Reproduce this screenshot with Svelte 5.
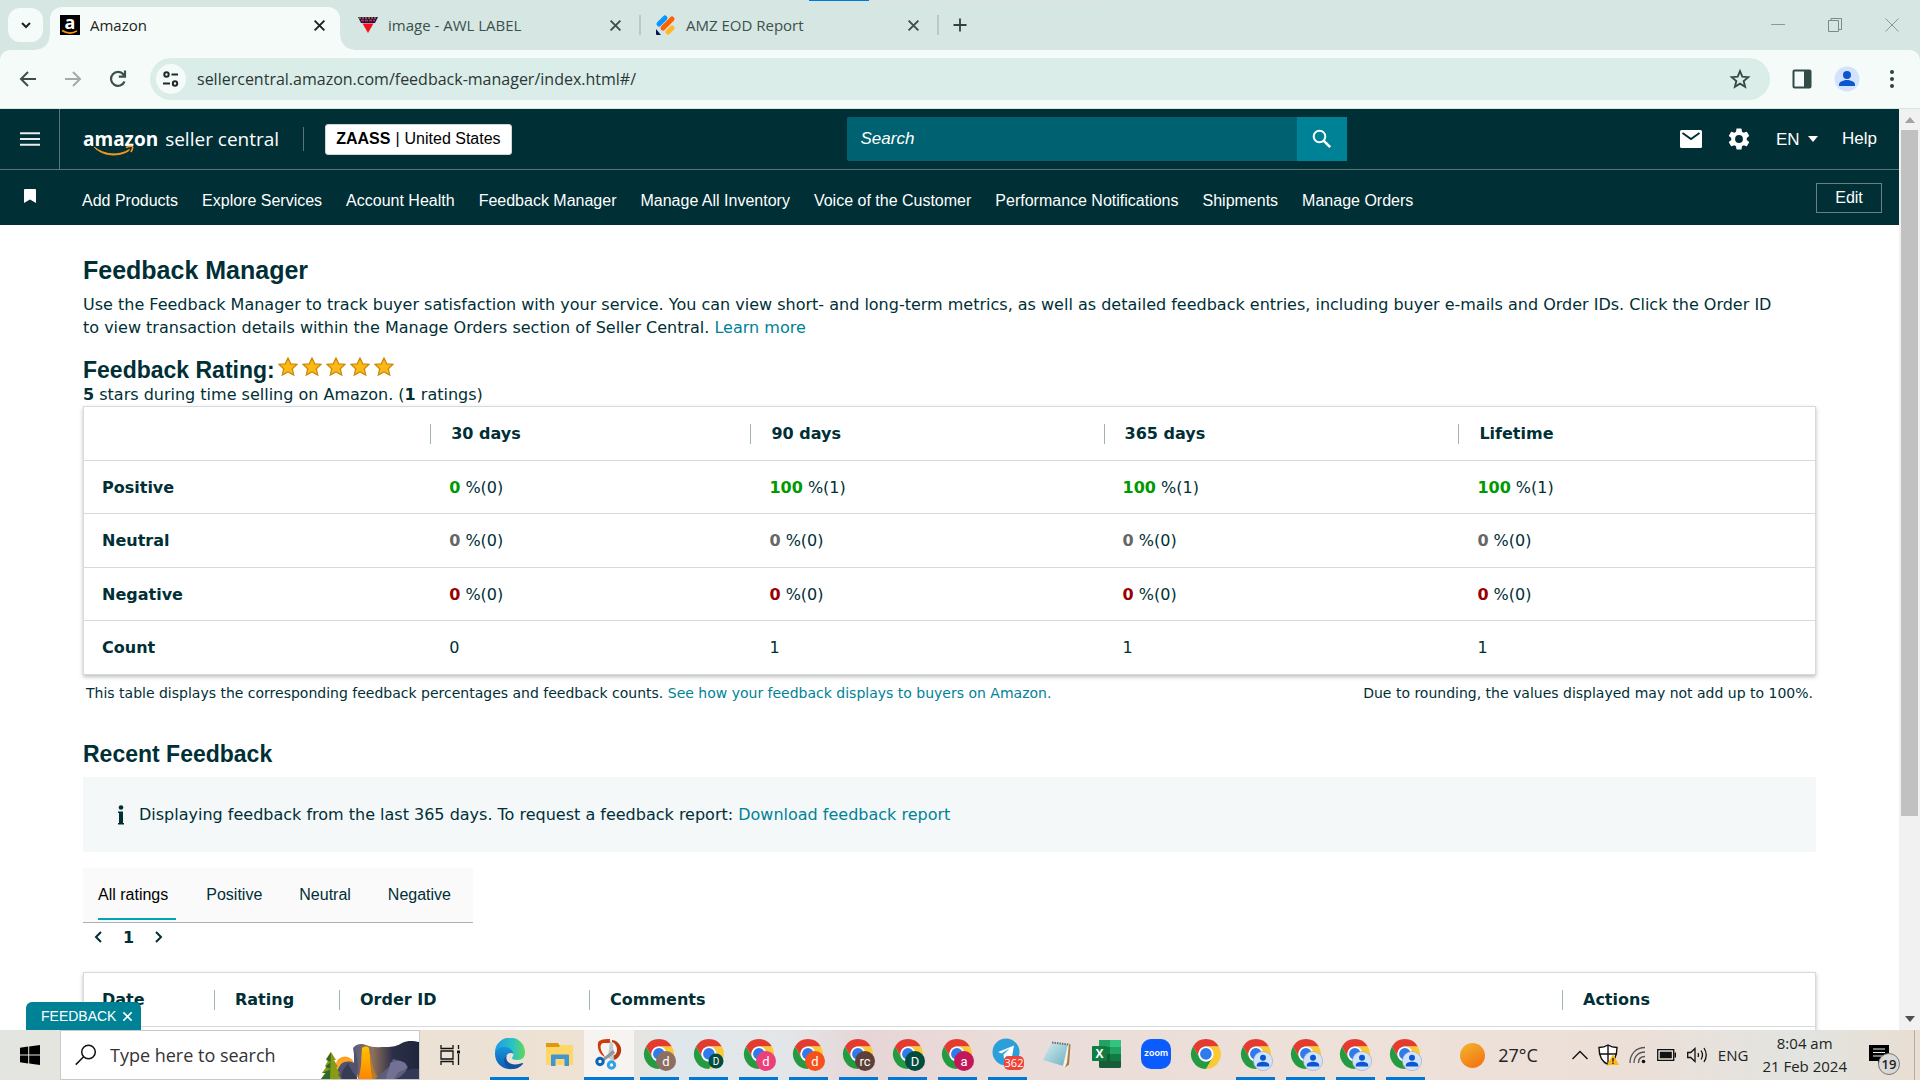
<script lang="ts">
	const tabs = [
		{ title: 'Amazon', icon: 'amazon', active: true },
		{ title: 'image - AWL LABEL', icon: 'awl', active: false },
		{ title: 'AMZ EOD Report', icon: 'jot', active: false }
	];

	const favourites = [
		'Add Products',
		'Explore Services',
		'Account Health',
		'Feedback Manager',
		'Manage All Inventory',
		'Voice of the Customer',
		'Performance Notifications',
		'Shipments',
		'Manage Orders'
	];

	const periods = ['30 days', '90 days', '365 days', 'Lifetime'];

	const ratings = [
		{ label: 'Positive', tone: 'good', values: [[0, 0], [100, 1], [100, 1], [100, 1]] },
		{ label: 'Neutral', tone: 'flat', values: [[0, 0], [0, 0], [0, 0], [0, 0]] },
		{ label: 'Negative', tone: 'bad', values: [[0, 0], [0, 0], [0, 0], [0, 0]] }
	];

	const counts = [0, 1, 1, 1];

	const filters = ['All ratings', 'Positive', 'Neutral', 'Negative'];
	let filter = $state('All ratings');

	let url = $state('sellercentral.amazon.com/feedback-manager/index.html#/');

	const apps = [
		{ name: 'Edge', kind: 'edge', open: true },
		{ name: 'File Explorer', kind: 'folder', open: false },
		{ name: 'Snipping Tool', kind: 'snip', open: true, current: true },
		{ name: 'Chrome', kind: 'chrome', open: true, badge: 'd', color: '#8d6e63' },
		{ name: 'Chrome', kind: 'chrome', open: true, badge: 'D', color: '#004d40', small: true },
		{ name: 'Chrome', kind: 'chrome', open: true, badge: 'd', color: '#ec407a' },
		{ name: 'Chrome', kind: 'chrome', open: true, badge: 'd', color: '#f4511e' },
		{ name: 'Chrome', kind: 'chrome', open: true, badge: 'rc', color: '#5d4037' },
		{ name: 'Chrome', kind: 'chrome', open: true, badge: 'D', color: '#004d40' },
		{ name: 'Chrome', kind: 'chrome', open: true, badge: 'a', color: '#c2185b' },
		{ name: 'Telegram', kind: 'telegram', open: true },
		{ name: 'Notepad', kind: 'notepad', open: false },
		{ name: 'Excel', kind: 'excel', open: false },
		{ name: 'Zoom', kind: 'zoom', open: false },
		{ name: 'Chrome', kind: 'chrome', open: false },
		{ name: 'Chrome', kind: 'chrome', open: true, person: true },
		{ name: 'Chrome', kind: 'chrome', open: true, person: true },
		{ name: 'Chrome', kind: 'chrome', open: true, person: true },
		{ name: 'Chrome', kind: 'chrome', open: true, person: true }
	];
</script>

{#snippet cross(size)}
	<svg width={size} height={size} viewBox="0 0 12 12" aria-hidden="true">
		<path d="M1.5 1.5l9 9M10.5 1.5l-9 9" stroke="currentColor" stroke-width="1.8" />
	</svg>
{/snippet}

{#snippet chromeIcon(app)}
	<svg width="36" height="36" viewBox="0 0 36 36" aria-hidden="true">
		<g transform="translate(1.6 1.6) scale(.68)">
			<path fill="#e33b2e" d="M24 2a22 22 0 0 1 19.05 11H24a11 11 0 0 0-9.53 16.5L4.95 13A22 22 0 0 1 24 2z" />
			<path fill="#fcc934" transform="rotate(120 24 24)" d="M24 2a22 22 0 0 1 19.05 11H24a11 11 0 0 0-9.53 16.5L4.95 13A22 22 0 0 1 24 2z" />
			<path fill="#249a41" transform="rotate(240 24 24)" d="M24 2a22 22 0 0 1 19.05 11H24a11 11 0 0 0-9.53 16.5L4.95 13A22 22 0 0 1 24 2z" />
			<circle cx="24" cy="24" r="11" fill="#fff" />
			<circle cx="24" cy="24" r="8.6" fill="#2f7bee" />
		</g>
		{#if app.badge}
			<circle cx={25} cy={25} r={app.small ? 7.5 : 10} fill={app.color} />
			<text x="25" y={app.small ? 29 : 30} text-anchor="middle" fill="#fff" font-size={app.small ? 10 : 13} font-family="Roboto, sans-serif">{app.badge}</text>
		{:else if app.person}
			<circle cx="25" cy="25" r="9.6" fill="#d3e3fd" stroke="#9aa4b5" stroke-width=".6" />
			<circle cx="25" cy="21.8" r="3" fill="#0b57d0" />
			<path d="M18.8 30.4v-1.2c0-2.4 3.6-3.4 6.2-3.4s6.2 1 6.2 3.4v1.2z" fill="#0b57d0" />
		{/if}
	</svg>
{/snippet}

<div class="screen">
	<header class="browser">
		<div class="strip">
			<button class="tab-search" aria-label="Search tabs">
				<svg width="14" height="14" viewBox="0 0 14 14"><path d="M3 5l4 4 4-4" fill="none" stroke="#1c2322" stroke-width="2" /></svg>
			</button>
			{#each tabs as tab}
				<div class="tab" class:active={tab.active}>
					<svg width="20" height="20" viewBox="0 0 20 20" aria-hidden="true">
						{#if tab.icon === 'amazon'}
							<rect width="20" height="20" fill="#000" />
							<text x="10" y="14" text-anchor="middle" font-size="18" font-weight="bold" fill="#fff" font-family="Open Sans, sans-serif">a</text>
							<path d="M2 15.5q8 5 15 .3" fill="none" stroke="#f90" stroke-width="1.6" />
						{:else if tab.icon === 'awl'}
							<path d="M0 2h20l-3 6H3z" fill="#2b1140" />
							<path d="M1 3h18" stroke="#d9a036" stroke-width="1.2" stroke-dasharray="2 1" />
							<path d="M3 5.5h14" stroke="#c2336b" stroke-width="1.4" stroke-dasharray="3 1" />
							<path d="M4.500 8.500h11L10 18z" fill="#f5101c" />
						{:else}
							<path d="M3 9l6-6" stroke="#0a96ff" stroke-width="5" stroke-linecap="round" />
							<path d="M7 13l9-9" stroke="#ff6100" stroke-width="5" stroke-linecap="round" />
							<path d="M12 17l4-4" stroke="#ffb629" stroke-width="5" stroke-linecap="round" />
							<path d="M0 14l5 6H1a1 1 0 0 1-1-1z" fill="#0a1551" />
						{/if}
					</svg>
					<span>{tab.title}</span>
					<button aria-label="Close {tab.title}">{@render cross(13)}</button>
				</div>
			{/each}
			<button class="new-tab" aria-label="New tab">
				<svg width="14" height="14" viewBox="0 0 14 14"><path d="M7 .5v13M.5 7h13" stroke="#2f4240" stroke-width="1.8" /></svg>
			</button>
			<div class="window-buttons">
				<button aria-label="Minimize"><svg width="14" height="14" viewBox="0 0 14 14"><path d="M0 6.500h14" stroke="#8d9996" /></svg></button>
				<button aria-label="Restore">
					<svg width="14" height="14" viewBox="0 0 14 14" fill="none" stroke="#7d8987"><path d="M.5 2.500h10v11H.5zM3 2.500v-2h10.500v11H11" /></svg>
				</button>
				<button aria-label="Close window"><svg width="14" height="14" viewBox="0 0 14 14"><path d="M.5.5l13 13M13.500.5l-13 13" stroke="#8d9996" /></svg></button>
			</div>
			<div class="loading"></div>
		</div>

		<div class="toolbar">
			<div class="history">
				<button aria-label="Back">
					<svg width="20" height="20" viewBox="0 0 20 20" fill="none" stroke="#3b504d" stroke-width="2"><path d="M18 10H3M10 3l-7 7 7 7" /></svg>
				</button>
				<button aria-label="Forward">
					<svg width="20" height="20" viewBox="0 0 20 20" fill="none" stroke="#a3abaa" stroke-width="2"><path d="M2 10h15M10 3l7 7-7 7" /></svg>
				</button>
				<button aria-label="Reload">
					<svg width="20" height="20" viewBox="0 0 20 20" fill="none" stroke="#3b504d" stroke-width="2.200"><path d="M16.500 12.500A7 7 0 1 1 15.500 5.500L17 7.300M17 1.500v6.200h-6.200" /></svg>
				</button>
			</div>
			<div class="address">
				<button class="site" aria-label="Site information">
					<svg width="16" height="16" viewBox="0 0 16 16" fill="none" stroke="#222b2a" stroke-width="2"><circle cx="3.500" cy="3.500" r="2.200" /><path d="M8.500 3.500H15M0 12.500h7" /><circle cx="12" cy="12.500" r="2.200" /></svg>
				</button>
				<input aria-label="Address" bind:value={url} />
				<button aria-label="Bookmark this page">
					<svg width="22" height="22" viewBox="0 0 24 24" fill="none" stroke="#3b4745" stroke-width="2"><path d="M12 3.500l2.500 6 6.500.500-5 4.200 1.600 6.300-5.600-3.400-5.600 3.400L8 14.200 3 10l6.500-.500z" /></svg>
				</button>
			</div>
			<button aria-label="Side panel">
				<svg width="20" height="20" viewBox="0 0 20 20"><rect x="1.500" y="1.500" width="17" height="17" rx="1" fill="none" stroke="#334b48" stroke-width="2" /><path d="M12 1h7v18h-7z" fill="#334b48" /></svg>
			</button>
			<button aria-label="Profile">
				<svg width="26" height="26" viewBox="0 0 26 26"><circle cx="13" cy="13" r="12.500" fill="#d3e3fd" /><circle cx="13" cy="9" r="4" fill="#0b57d0" /><path d="M5 20v-1.500c0-3 5-4.500 8-4.500s8 1.500 8 4.500V20z" fill="#0b57d0" /></svg>
			</button>
			<button aria-label="Menu">
				<svg width="20" height="20" viewBox="0 0 20 20" fill="#2d4340"><circle cx="10" cy="3" r="2" /><circle cx="10" cy="10" r="2" /><circle cx="10" cy="17" r="2" /></svg>
			</button>
		</div>
	</header>

	<div class="viewport">
		<div class="page">
			<div class="masthead">
				<button class="burger" aria-label="Menu">
					<svg width="20" height="14" viewBox="0 0 20 14"><path d="M0 1.200h20M0 7h20M0 12.800h20" stroke="#e8eeee" stroke-width="2" /></svg>
				</button>
				<a class="logo" href="#/">
					<b>amazon</b> <span>seller central</span>
					<svg width="42" height="11" viewBox="0 0 42 11" aria-hidden="true"><path d="M1 2c11 8.500 25 9 35.500 2.500l-1.200 1.700C25 12 10 11.500 1 2z" fill="#f7981d" stroke="#f7981d" /><path d="M33 2.500c3-1.500 6-1.300 6.500-.8s0 3.300-1.800 5.300" fill="none" stroke="#f7981d" stroke-width="1.600" /></svg>
				</a>
				<button class="account"><b>ZAASS</b> | <span>United States</span></button>
				<form class="search" role="search">
					<input type="search" aria-label="Search" placeholder="Search" />
					<button type="button" aria-label="Submit search">
						<svg width="20" height="20" viewBox="0 0 20 20" fill="none" stroke="#fff"><circle cx="7.500" cy="7.500" r="5.800" stroke-width="2" /><path d="M11.800 11.800l6.400 6.400" stroke-width="2.600" /></svg>
					</button>
				</form>
				<div class="tools">
					<button aria-label="Messages">
						<svg width="22" height="18" viewBox="0 0 22 18"><rect width="22" height="18" rx="1.500" fill="#fff" /><path d="M2.500 3l8.500 6 8.500-6" fill="none" stroke="#002f36" stroke-width="2" /></svg>
					</button>
					<button aria-label="Settings">
						<svg width="26" height="26" viewBox="0 0 24 24" fill="#fff"><path d="M19.140 12.940c.04-.3.06-.61.06-.94 0-.32-.02-.64-.07-.94l2.030-1.580a.49.49 0 0 0 .12-.61l-1.920-3.320a.488.488 0 0 0-.59-.22l-2.390.96c-.5-.38-1.030-.7-1.620-.94l-.36-2.540a.484.484 0 0 0-.48-.41h-3.840c-.24 0-.43.17-.47.41l-.36 2.540c-.59.24-1.130.57-1.620.94l-2.390-.96c-.22-.08-.47 0-.59.22L2.740 8.870c-.12.21-.08.47.12.61l2.030 1.580c-.05.3-.09.63-.09.94s.02.64.07.94l-2.030 1.580a.49.49 0 0 0-.12.61l1.920 3.320c.12.22.37.29.59.22l2.390-.96c.5.38 1.030.7 1.620.94l.36 2.540c.05.24.24.41.48.41h3.840c.24 0 .44-.17.47-.41l.36-2.540c.59-.24 1.130-.56 1.620-.94l2.390.96c.22.08.47 0 .59-.22l1.920-3.320c.12-.22.07-.47-.12-.61l-2.010-1.580zM12 15.600A3.600 3.600 0 1 1 12 8.400a3.600 3.600 0 0 1 0 7.200z" /></svg>
					</button>
					<label class="language">
						<select aria-label="Language"><option>EN</option></select>
						<svg width="10" height="6" viewBox="0 0 10 6" aria-hidden="true"><path d="M0 0h10L5 6z" fill="#fff" /></svg>
					</label>
					<a href="#/help">Help</a>
				</div>
			</div>

			<nav class="favourites">
				<span class="pin"><svg width="12" height="14" viewBox="0 0 12 14" aria-hidden="true"><path d="M0 1a1 1 0 0 1 1-1h10a1 1 0 0 1 1 1v13l-6-3.500L0 14z" fill="#fff" /></svg></span>
				<div class="links">
					{#each favourites as item}
						<a href="#/">{item}</a>
					{/each}
				</div>
				<button>Edit</button>
			</nav>

			<main>
				<h1>Feedback Manager</h1>
				<p class="intro">
					Use the Feedback Manager to track buyer satisfaction with your service. You can view short- and long-term metrics, as well as detailed feedback entries, including buyer e-mails and Order IDs. Click the Order ID to view transaction details within the Manage Orders section of Seller Central. <a href="#/learn">Learn more</a>
				</p>

				<div class="rating-title">
					<h2>Feedback Rating:</h2>
					<div class="stars" role="img" aria-label="5 stars">
						{#each Array(5) as _}
							<svg width="20" height="20" viewBox="0 0 20 20"><path d="M10 1l2.700 5.800 6.300.6-4.700 4.300L15.700 18 10 15l-5.700 3 1.400-6.300L1 7.400l6.300-.6z" fill="#fdb913" stroke="#c98a0c" stroke-width="1.300" /></svg>
						{/each}
					</div>
				</div>
				<p class="summary"><b>5</b> stars during time selling on Amazon. (<b>1</b> ratings)</p>

				<table class="metrics">
					<thead>
						<tr>
							<td></td>
							{#each periods as period}
								<th scope="col"><span>{period}</span></th>
							{/each}
						</tr>
					</thead>
					<tbody>
						{#each ratings as row}
							<tr>
								<th scope="row">{row.label}</th>
								{#each row.values as [percent, count]}
									<td><b class={row.tone}>{percent}</b> %({count})</td>
								{/each}
							</tr>
						{/each}
						<tr>
							<th scope="row">Count</th>
							{#each counts as count}
								<td>{count}</td>
							{/each}
						</tr>
					</tbody>
				</table>
				<div class="notes">
					<span>This table displays the corresponding feedback percentages and feedback counts. <a href="#/display">See how your feedback displays to buyers on Amazon.</a></span>
					<span>Due to rounding, the values displayed may not add up to 100%.</span>
				</div>

				<h2 class="recent">Recent Feedback</h2>
				<div class="info">
					<svg width="6" height="20" viewBox="0 0 6 20" aria-hidden="true"><circle cx="3" cy="2.500" r="2.300" fill="#002f36" /><path d="M0 6.500h5V18h1v1.500H0V18h1V8H0z" fill="#002f36" /></svg>
					<span>Displaying feedback from the last 365 days. To request a feedback report: <a href="#/report">Download feedback report</a></span>
				</div>

				<div class="filters" role="tablist">
					{#each filters as item}
						<button role="tab" aria-selected={filter === item} class:selected={filter === item} onclick={() => (filter = item)}>{item}</button>
					{/each}
				</div>
				<div class="pager">
					<button aria-label="Previous page"><svg width="8" height="12" viewBox="0 0 8 12"><path d="M7 1L2 6l5 5" fill="none" stroke="#002f36" stroke-width="2" /></svg></button>
					<b>1</b>
					<button aria-label="Next page"><svg width="8" height="12" viewBox="0 0 8 12"><path d="M1 1l5 5-5 5" fill="none" stroke="#002f36" stroke-width="2" /></svg></button>
				</div>

				<table class="entries">
					<thead>
						<tr>
							<th scope="col"><span>Date</span></th>
							<th scope="col"><span>Rating</span></th>
							<th scope="col"><span>Order ID</span></th>
							<th scope="col"><span>Comments</span></th>
							<th scope="col"><span>Actions</span></th>
						</tr>
					</thead>
					<tbody>
						<tr><td colspan="5"></td></tr>
					</tbody>
				</table>
			</main>
			<button class="feedback-tab">FEEDBACK {@render cross(11)}</button>
		</div>

		<div class="scrollbar">
			<svg width="10" height="6" viewBox="0 0 10 6" aria-hidden="true"><path d="M0 6h10L5 0z" fill="#a3a3a3" /></svg>
			<div class="rail"><div class="thumb"></div></div>
			<svg width="10" height="6" viewBox="0 0 10 6" aria-hidden="true"><path d="M0 0h10L5 6z" fill="#505050" /></svg>
		</div>
	</div>

	<footer class="taskbar">
		<button class="start" aria-label="Start">
			<svg width="20" height="20" viewBox="0 0 20 20"><path d="M0 2.800L8.200 1.600v8H0zM9.200 1.500L20 0v9.600H9.200zM0 10.500h8.200v8L0 17.300zM9.200 10.500H20V20L9.200 18.600z" /></svg>
		</button>
		<div class="task-search">
			<svg width="22" height="22" viewBox="0 0 22 22" fill="none" stroke="#111" stroke-width="1.500" aria-hidden="true"><circle cx="13.500" cy="8" r="6.800" /><path d="M8.600 12.800L.8 20.600" /></svg>
			<input aria-label="Type here to search" placeholder="Type here to search" />
			<svg class="scene" width="99" height="38" viewBox="0 0 99 38" aria-hidden="true">
				<defs>
					<linearGradient id="sun" x2="0" y2="1"><stop offset="0" stop-color="#ff9d1c" /><stop offset="1" stop-color="#ffb84d" /></linearGradient>
					<linearGradient id="fall" x2="0" y2="1"><stop offset="0" stop-color="#ffc400" /><stop offset="1" stop-color="#ff8400" /></linearGradient>
					<linearGradient id="rock"><stop offset="0" stop-color="#5a5d7c" /><stop offset=".3" stop-color="#8d705d" /><stop offset=".6" stop-color="#2b3048" /><stop offset="1" stop-color="#20263a" /></linearGradient>
				</defs>
				<circle cx="25" cy="25" r="9.500" fill="url(#sun)" />
				<path d="M33 7c3-4 8-5 13-3 6 3 14 2 20 2 7 0 11-1 16-4 6-3 12-2 17-1v37H38z" fill="url(#rock)" />
				<path d="M42 7c2-2 6-2 7 0 2 10 1 20 4 31H38c4-11 3-21 4-31z" fill="url(#fall)" />
				<path d="M34 8c5 8 4 20 3 30H14c1-6 4-10 7-15 4-3 9-3 13-1z" fill="#50526e" />
				<path d="M28 22c2 7 7 10 9 16H22c-2-6 2-10 6-16z" fill="#383b54" />
				<path d="M49 8c4 11 2 20 10 30h-6c-3-10-2-20-4-30z" fill="#b67b2f" />
				<path d="M55 38l14-12 4-8 8 2 7 6-4 8-8 4z" fill="#5d5d7c" />
				<path d="M70 22c6-3 15-3 17 3 0 5-8 4-10 8l-3 5h-8c0-5 4-10 4-16z" fill="#737095" />
				<path d="M83 33c5-5 9-6 16-5v10H78z" fill="#343a55" />
				<path d="M11 11l5 8h-2l4 7h-2l4 7h-2l3 5H1l4-6H2l5-7H5l4-7H6z" fill="#8a9a13" />
				<path d="M11 11l-5 8 5 2-6 5 6 2-9 4h4l-5 6h9z" fill="#2d6a2a" />
			</svg>
		</div>
		<button class="task-view" aria-label="Task view">
			<svg width="21" height="20" viewBox="0 0 21 20" fill="none" stroke="#111" stroke-width="1.300"><path d="M1 0v3.500h12V0M1 20v-3.500h12V20M1 6h12v8H1zM18.500 0v4M18.500 9v11" /><path d="M17 5.500h3v3h-3z" fill="#111" stroke="none" /></svg>
		</button>

		<div class="apps">
			{#each apps as app}
				<button class:open={app.open} class:current={app.current} aria-label={app.name}>
					{#if app.kind === 'chrome'}
						{@render chromeIcon(app)}
					{:else if app.kind === 'edge'}
						<svg width="32" height="32" viewBox="0 0 32 32">
							<defs>
								<linearGradient id="edge-top"><stop offset="0" stop-color="#1b9de2" /><stop offset=".6" stop-color="#2cc3c2" /><stop offset="1" stop-color="#62d957" /></linearGradient>
								<linearGradient id="edge-low" x2="0" y2="1"><stop offset="0" stop-color="#1794dc" /><stop offset="1" stop-color="#0b5cb4" /></linearGradient>
							</defs>
							<path d="M1 15A15 15 0 0 1 31 14c.5 6-4 8-8 8-3 0-5-1-5-2 0-.8 1.500-1.500 1.500-4 0-3-4-6-8.500-6-5 0-8.500 2.500-10 5z" fill="url(#edge-top)" />
							<path d="M1 15c1-4 5-6 9-6 5 0 9.500 3 9.500 7-2-2-6-1-7 2-2 6 4 12 8 12.500-10 3-19.500-4.500-19.500-14.500z" fill="url(#edge-low)" />
							<path d="M12.500 18c-1.500 5 3.500 8.500 8.500 8.500 4 0 7-1.800 8-1.500s-3 5-8.500 6c-8 0-14-8-8-13z" fill="#14529d" />
						</svg>
					{:else if app.kind === 'folder'}
						<svg width="28" height="26" viewBox="0 0 28 26"><path d="M0 2h12l2 3h13v8H0z" fill="#dc9a0c" /><path d="M0 6h13l2-2h12v20H0z" fill="#ffd767" /><path d="M5 14.500a1 1 0 0 1 1-1h16a1 1 0 0 1 1 1V25h-4.500v-7h-9v7H5z" fill="#3f95d6" /></svg>
					{:else if app.kind === 'snip'}
						<svg width="28" height="32" viewBox="0 0 28 32">
							<path d="M3 5c1-3 4-4 12-4v4H8c-3 1-3 5-1 9l3 5C5 17 2 11 3 5z" fill="#cf3c0c" />
							<path d="M17 2c7 1 10 7 9 12-1 4-4 8-8 8l-2-4c4 0 6-3 6-6 0-4-2-7-5-8z" fill="#b93a10" />
							<path d="M15 2l3 4 1 17-6-3z" fill="#c4c9cc" /><path d="M18 12l2 3-11 8-2-2z" fill="#8f979c" />
							<circle cx="5" cy="23.500" r="3.200" fill="none" stroke="#0b66b5" stroke-width="3" /><circle cx="16.500" cy="27" r="3.200" fill="none" stroke="#2ea3ea" stroke-width="3" />
						</svg>
					{:else if app.kind === 'telegram'}
						<svg width="36" height="36" viewBox="0 0 36 36">
							<circle cx="17" cy="16" r="13.500" fill="#2a9fda" /><path d="M9 16l16-6.500-2.500 14-5-3.500-2.500 3-.5-4.500 6-6-8 5z" fill="#fff" />
							<rect x="15" y="20" width="20" height="14" rx="5" fill="#ef4438" /><text x="25" y="31" text-anchor="middle" fill="#fff" font-size="11" font-family="Open Sans, sans-serif">362</text>
						</svg>
					{:else if app.kind === 'notepad'}
						<svg width="30" height="28" viewBox="0 0 30 28">
							<defs><linearGradient id="note" y2="1"><stop offset="0" stop-color="#d6eef0" /><stop offset="1" stop-color="#6fb0c0" /></linearGradient></defs>
							<path d="M11 2l16 2-1 20-3 3-18-6z" fill="#f3f1e8" /><path d="M27 4l1.500.5-1.500 20-4 3 2-5z" fill="#a87a3e" /><path d="M10 2l16 2-5 22L1 20z" fill="url(#note)" /><path d="M10 2.500l17 2" stroke="#6c7477" stroke-width="2" stroke-dasharray="1.500 1" />
						</svg>
					{:else if app.kind === 'excel'}
						<svg width="30" height="28" viewBox="0 0 30 28">
							<rect x="7" width="22" height="28" rx="1.500" fill="#185c37" /><path d="M7 0h11v14H7z" fill="#21a366" /><path d="M18 0h10a1 1 0 0 1 1 1v6H18z" fill="#33c481" /><path d="M7 7h11v7H7z" fill="#107c41" /><path d="M18 7h11v7H18z" fill="#21a366" /><path d="M18 14h11v7H18z" fill="#107c41" />
							<rect y="6" width="15" height="15" rx="1" fill="#107c41" /><text x="7.500" y="18" text-anchor="middle" fill="#fff" font-size="12" font-weight="bold" font-family="Open Sans, sans-serif">X</text>
						</svg>
					{:else}
						<svg width="30" height="30" viewBox="0 0 30 30"><rect width="30" height="30" rx="10" fill="#0b5cff" /><text x="15" y="17" text-anchor="middle" fill="#fff" font-size="9" font-weight="600" font-family="Inter, sans-serif">zoom</text></svg>
					{/if}
				</button>
			{/each}
		</div>

		<div class="tray">
			<span class="sun"></span>
			<span class="temperature">27°C</span>
			<svg width="16" height="10" viewBox="0 0 16 10" fill="none" stroke="#111" stroke-width="1.400"><path d="M.5 9L8 1.500 15.500 9" /></svg>
			<svg width="21" height="22" viewBox="0 0 21 22"><path d="M10 1c3 2 6 2.500 9 2.500 0 8-2 14-9 17-7-3-9-9-9-17C4 3.500 7 3 10 1z" fill="#fff" stroke="#111" stroke-width="1.400" /><path d="M10 1v19M1.500 10h17" stroke="#111" stroke-width="1.400" /><path d="M15 10l6 11H9z" fill="#fdb813" /><path d="M15 14v3.500M15 18.500V20" stroke="#111" stroke-width="1.300" /></svg>
			<svg width="18" height="18" viewBox="0 0 18 18" fill="none" stroke="#555" stroke-width="1.300"><path d="M1 17C1 8 7 1.500 16 1.500M5 17C5 10.500 9.500 6 16 6M9.500 17c0-4 2.500-6.500 6.500-6.500" /><circle cx="14.500" cy="15.500" r="1.800" fill="#111" stroke="none" /></svg>
			<svg width="20" height="12" viewBox="0 0 20 12"><path d="M.7.7h16v10.600H.7z" fill="none" stroke="#111" stroke-width="1.300" /><path d="M2.800 2.800h12v6.400h-12zM17.500 3.500H19v5h-1.500z" fill="#111" /></svg>
			<svg width="21" height="18" viewBox="0 0 21 18" fill="none" stroke="#111" stroke-width="1.300"><path d="M.7 6.500h3L8 2.500v13L3.700 11.500h-3zM11 7q1 2 0 4M14 4.500q3 4.500 0 9M17 2q4.500 7 0 14" /></svg>
			<span>ENG</span>
			<time datetime="2024-02-21T08:04">8:04 am<br />21 Feb 2024</time>
			<button class="bell" aria-label="19 notifications">
				<svg width="20" height="20" viewBox="0 0 20 20"><path d="M0 0h20v16h-7l-4 3v-3H0z" /><path d="M4 4h12M4 7.500h12M4 11h12" stroke="#eee" stroke-width="1.200" /></svg>
				<span>19</span>
			</button>
		</div>
	</footer>
</div>

<style>
	:global(body) {
		margin: 0;
	}

	* {
		box-sizing: border-box;
	}

	button {
		display: flex;
		align-items: center;
		justify-content: center;
		padding: 0;
		border: 0;
		background: none;
		font: inherit;
		color: inherit;
		cursor: pointer;
	}

	input,
	select {
		min-width: 0;
		padding: 0;
		border: 0;
		outline: 0;
		background: none;
		font: inherit;
		color: inherit;
		appearance: none;
	}

	svg {
		flex-shrink: 0;
	}

	.screen {
		display: flex;
		flex-direction: column;
		height: 100vh;
		overflow: hidden;
	}

	/* browser chrome */
	.browser {
		background: #d6e6e2;
		font-family: 'Open Sans', sans-serif;
		font-size: 15px;
		color: #3b504d;
	}

	.strip {
		position: relative;
		display: flex;
		align-items: center;
		height: 50px;
		padding-left: 8px;
	}

	.tab-search {
		width: 35px;
		height: 34px;
		margin-right: 7px;
		border-radius: 12px;
		background: #f5fbf9;
	}

	.tab {
		position: relative;
		display: flex;
		align-items: center;
		gap: 10px;
		width: 298px;
		height: 43px;
		padding: 0 16px 0 18px;
	}

	.tab > svg {
		overflow: visible;
	}

	.tab span {
		flex: 1;
	}

	.tab:not(.active)::after {
		content: '';
		position: absolute;
		right: -3px;
		width: 2px;
		height: 20px;
		background: #bec8c5;
	}

	.tab.active {
		align-self: flex-end;
		width: 290px;
		padding: 0 14px 7px 10px;
		border-radius: 12px 12px 0 0;
		background: #f5fbf9;
		color: #1c2322;
	}

	.tab.active::before,
	.tab.active::after {
		content: '';
		position: absolute;
		bottom: 0;
		width: 14px;
		height: 14px;
	}

	.tab.active::before {
		right: 100%;
		background: radial-gradient(circle at 0 0, transparent 13px, #f5fbf9 14px);
	}

	.tab.active::after {
		left: 100%;
		background: radial-gradient(circle at 100% 0, transparent 13px, #f5fbf9 14px);
	}

	.new-tab {
		width: 48px;
		height: 34px;
	}

	.window-buttons {
		display: flex;
		margin-left: auto;
	}

	.window-buttons button {
		width: 57px;
		height: 50px;
	}

	.loading {
		position: absolute;
		top: 0;
		left: 809px;
		width: 301px;
		height: 1px;
		background: linear-gradient(90deg, #0078d7 60px, #dde0e0 60px);
	}

	.toolbar,
	.history {
		display: flex;
		align-items: center;
		gap: 22px;
	}

	.toolbar {
		height: 59px;
		padding: 0 18px;
		border-bottom: 1px solid #d6e6e2;
		border-radius: 10px 10px 0 0;
		background: #f5fbf9;
	}

	.history {
		gap: 25px;
	}

	.address {
		display: flex;
		flex: 1;
		align-items: center;
		height: 42px;
		padding: 0 19px 0 6px;
		border-radius: 21px;
		background: #daede8;
	}

	.site {
		width: 30px;
		height: 30px;
		margin-right: 11px;
		border-radius: 50%;
		background: #f5fbf9;
	}

	.address input {
		flex: 1;
		font-size: 16px;
		color: #2c3635;
	}

	/* page */
	.viewport {
		display: flex;
		flex: 1;
		min-height: 0;
	}

	.page {
		position: relative;
		flex: 1;
		min-width: 0;
		overflow: hidden;
		background: #fff;
		font-family: 'Liberation Sans', Arial, sans-serif;
		font-size: 16px;
		color: #002f36;
	}

	a {
		color: #008296;
		text-decoration: none;
	}

	.masthead {
		position: relative;
		display: flex;
		align-items: center;
		height: 61px;
		border-bottom: 1px solid #5c7478;
		background: #002f36;
		color: #fff;
		font-size: 17px;
	}

	.burger {
		width: 60px;
		height: 60px;
		border-right: 1px solid #5c7478;
	}

	.logo {
		position: relative;
		display: flex;
		gap: 7px;
		margin-left: 23px;
		padding-right: 24px;
		border-right: 1px solid #5c7478;
		color: #fff;
		font-family: 'Open Sans', sans-serif;
		font-size: 19px;
		line-height: 24px;
	}

	.logo svg {
		position: absolute;
		top: 18px;
		left: 10px;
	}

	.account {
		gap: 5px;
		height: 31px;
		margin-left: 21px;
		padding: 0 10px;
		border: 1px solid #cfd6d7;
		border-radius: 3px;
		background: #fff;
		color: #000;
		font-size: 16px;
	}

	.search {
		position: absolute;
		left: 50%;
		display: flex;
		width: 500px;
		height: 44px;
		margin-left: -103px;
	}

	.search input {
		flex: 1;
		padding: 0 14px;
		border-radius: 2px 0 0 2px;
		background: #006170;
	}

	.search input::placeholder {
		color: #fff;
		font-style: italic;
	}

	.search button {
		width: 50px;
		background: #008296;
	}

	.tools {
		display: flex;
		align-items: center;
		gap: 24px;
		margin-left: auto;
		padding-right: 22px;
	}

	.tools a {
		color: #fff;
	}

	.language {
		display: flex;
		align-items: center;
		gap: 8px;
	}

	.favourites {
		display: flex;
		align-items: center;
		height: 55px;
		padding-right: 17px;
		background: #002f36;
		color: #fff;
	}

	.pin {
		width: 60px;
		text-align: center;
	}

	.links {
		display: flex;
		flex: 1;
		gap: 24px;
		margin-left: 22px;
		padding-top: 6px;
	}

	.links a {
		color: #fff;
	}

	.favourites button {
		width: 66px;
		height: 30px;
		border: 1px solid #6a8084;
	}

	main {
		padding: 29px 83px 0;
		font-family: Verdana, 'DejaVu Sans', sans-serif;
		line-height: 23px;
	}

	h1,
	h2,
	p {
		margin: 0;
	}

	h1,
	h2 {
		font-family: 'Liberation Sans', Arial, sans-serif;
		font-size: 25px;
		line-height: 32px;
	}

	h2 {
		font-size: 23px;
		line-height: 26px;
	}

	h1 {
		margin-bottom: 7px;
	}

	.intro {
		padding-right: 24px;
	}

	.rating-title {
		display: flex;
		gap: 3px;
		margin-top: 18px;
	}

	.stars {
		display: flex;
		gap: 4px;
	}

	.metrics,
	.entries {
		width: 100%;
		border: 1px solid #d5dbdb;
		border-collapse: separate;
		border-spacing: 0;
		box-shadow: 0 2px 4px rgba(0, 0, 0, 0.25);
		table-layout: fixed;
		text-align: left;
	}

	td,
	th {
		height: 53px;
		padding: 0 19px;
		border-top: 1px solid #d5dbdb;
	}

	tr > :first-child {
		padding-left: 18px;
	}

	tbody tr:nth-child(even) > * {
		height: 54px;
	}

	thead td,
	thead th {
		border-top: 0;
	}

	thead th {
		padding: 0;
	}

	thead th span {
		display: block;
		height: 20px;
		padding-left: 20px;
		border-left: 1px solid #a2b1b4;
		line-height: 20px;
	}

	.entries th:first-child span {
		padding-left: 0;
		border-left: 0;
	}

	.metrics td:nth-child(1) {
		width: 20%;
	}

	.metrics th:nth-child(2) {
		width: 18.5%;
	}

	.metrics th:nth-child(3) {
		width: 20.4%;
	}

	.metrics th:nth-child(4) {
		width: 20.5%;
	}

	.good {
		color: #090;
	}

	.flat {
		color: #666;
	}

	.bad {
		color: #900;
	}

	.notes {
		display: flex;
		justify-content: space-between;
		padding: 7px 3px;
		font-size: 14px;
	}

	.recent {
		margin-top: 29px;
	}

	.info {
		display: flex;
		align-items: center;
		gap: 15px;
		height: 75px;
		margin-top: 10px;
		padding-left: 35px;
		background: #f4f8f9;
	}

	.filters {
		display: flex;
		gap: 23px;
		width: fit-content;
		height: 55px;
		margin-top: 16px;
		padding: 0 15px 2px;
		border-bottom: 1px solid #aab3b4;
		background: #fafafa;
		font-family: 'Liberation Sans', Arial, sans-serif;
	}

	.filters button {
		padding: 2px 7px 0;
		border-bottom: 2px solid transparent;
	}

	.filters .selected {
		padding-left: 0;
		padding-right: 8px;
		border-color: #00a4b4;
		color: #000;
	}

	.pager {
		display: flex;
		align-items: center;
		gap: 21px;
		height: 28px;
		margin-bottom: 21px;
		padding-left: 11px;
	}

	.entries th:nth-child(1) {
		width: 130px;
	}

	.entries th:nth-child(2) {
		width: 125px;
	}

	.entries th:nth-child(3) {
		width: 250px;
	}

	.entries th:nth-child(5) {
		width: 253px;
	}

	.feedback-tab {
		position: absolute;
		bottom: 0;
		left: 26px;
		gap: 6px;
		height: 28px;
		padding: 0 8px 0 15px;
		border-radius: 6px 6px 0 0;
		background: #008296;
		color: #fff;
		font-size: 14px;
	}

	.scrollbar {
		display: flex;
		flex-direction: column;
		align-items: center;
		width: 21px;
		padding: 8px 0;
		background: #f1f1f1;
	}

	.rail {
		flex: 1;
		width: 17px;
		padding: 7px 0;
	}

	.thumb {
		height: 78%;
		background: #c1c1c1;
	}

	/* desktop taskbar */
	.taskbar {
		display: flex;
		align-items: center;
		height: 50px;
		background: linear-gradient(90deg, #e3e5e0 0, #ebe1d4 22%, #ede2d4 31%, #dfe7ea 35%, #e3e6e9 41%, #e6d5d6 45%, #eadcd9 52%, #ede1d9 70%, #ecdfd8 85%, #e2e4e0 94%, #e9ded2 100%);
		font-family: 'Open Sans', sans-serif;
		font-size: 15px;
		color: #222;
	}

	.start {
		width: 60px;
		height: 50px;
	}

	.task-search {
		display: flex;
		align-items: center;
		width: 360px;
		height: 50px;
		padding-left: 14px;
		border: 1px solid #c9c9c9;
		background: #fff;
		font-size: 18px;
	}

	.task-search input {
		flex: 1;
		padding-left: 13px;
	}

	.task-search input::placeholder {
		color: #333;
	}

	.scene {
		align-self: flex-end;
	}

	.task-view {
		width: 60px;
		height: 50px;
	}

	.apps {
		display: flex;
		width: 945px;
		margin-left: 5px;
	}

	.apps button {
		flex: 1;
		height: 50px;
		border-bottom: 3px solid transparent;
	}

	.apps .open {
		background: linear-gradient(#0078d7, #0078d7) center bottom / 39px 3px no-repeat border-box;
	}

	.apps .current {
		border-color: #0078d7;
		background: #f6f3f1;
	}

	.tray {
		display: flex;
		flex: 1;
		align-items: center;
		justify-content: flex-end;
		gap: 10px;
		padding-right: 5px;
		white-space: nowrap;
	}

	.sun {
		width: 25px;
		height: 25px;
		border-radius: 50%;
		background: linear-gradient(150deg, #f1b82d, #f56b0f);
	}

	.temperature {
		margin: 0 24px 0 3px;
		font-size: 18px;
	}

	time {
		margin-left: 4px;
		line-height: 23px;
		text-align: center;
	}

	.bell {
		position: relative;
		width: 46px;
		height: 50px;
		margin-left: 12px;
		border-right: 1px solid #b5aca6;
		padding-right: 16px;
	}

	.bell svg {
		margin-right: 10px;
	}

	.bell span {
		position: absolute;
		top: 23px;
		left: 9px;
		width: 22px;
		height: 22px;
		border: 1px solid #777;
		border-radius: 50%;
		background: #d8d8d5;
		font-size: 13px;
		font-weight: 600;
		line-height: 20px;
	}
</style>
